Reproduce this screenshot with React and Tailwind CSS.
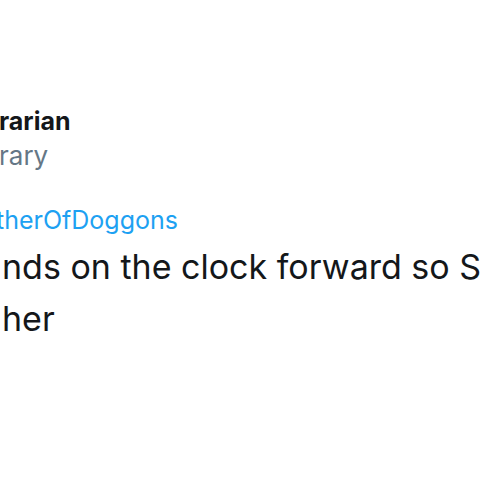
import React from 'react';

export default function App() {
    return (
        <div className="w-[480px] h-[480px] bg-white overflow-hidden relative" style={{ fontFamily: 'Inter, "Liberation Sans", sans-serif' }}>
            <div className="pt-[105px]">
                {/* header */}
                <div className="whitespace-nowrap text-[25px] leading-[32px] font-bold text-[#14171a] -ml-[1px]">rarian</div>
                <div className="whitespace-nowrap text-[26px] leading-[32px] text-[#657786] -ml-[1px] mt-[3px]">rary</div>

                {/* reply line */}
                <div className="whitespace-nowrap text-[25px] leading-[30px] text-[#1da1f2] mt-[33px] -ml-[4px]">therOfDoggons</div>

                {/* body */}
                <div className="whitespace-nowrap text-[34px] leading-[52px] text-[#14171a] mt-[6px] ml-[2px]">
                    <div>nds on the clock forward so Someone</div>
                    <div>her</div>
                </div>
            </div>
        </div>
    );
}
